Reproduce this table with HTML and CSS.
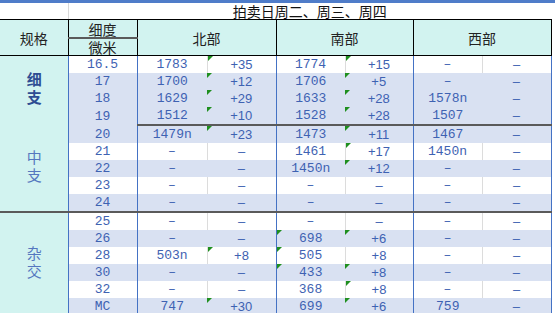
FILE: index.html
```html
<!DOCTYPE html>
<html lang="zh">
<head>
<meta charset="utf-8">
<title>拍卖日</title>
<link rel="stylesheet" href="styles.css">
</head>
<body>
<div class="sheet">
  <div class="topbar"></div>
  <table class="grid">
    <colgroup>
      <col class="c-lab"><col class="c-fine"><col class="c-nv"><col class="c-nd"><col class="c-sv"><col class="c-sd"><col class="c-wv"><col class="c-wd">
    </colgroup>
    <tr class="title">
      <td class="blank"></td>
      <td class="title-cell" colspan="7">拍卖日周二、周三、周四</td>
    </tr>
    <tr class="head1">
      <th class="h-lab" rowspan="2">规格</th>
      <th class="h-fine1">细度</th>
      <th class="h-reg" colspan="2" rowspan="2">北部</th>
      <th class="h-reg" colspan="2" rowspan="2">南部</th>
      <th class="h-reg" colspan="2" rowspan="2">西部</th>
    </tr>
    <tr class="head2">
      <th class="h-fine2">微米</th>
    </tr>

    <tr class="w">
      <td class="lab bold" rowspan="4"><span class="vt">细支</span></td>
      <td class="fine">16.5</td>
      <td class="v">1783</td><td class="d tri">+35</td>
      <td class="v">1774</td><td class="d tri">+15</td>
      <td class="v">–</td><td class="d">–</td>
    </tr>
    <tr class="s">
      <td class="fine">17</td>
      <td class="v">1700</td><td class="d tri">+12</td>
      <td class="v">1706</td><td class="d tri">+5</td>
      <td class="v">–</td><td class="d">–</td>
    </tr>
    <tr class="s">
      <td class="fine">18</td>
      <td class="v">1629</td><td class="d tri">+29</td>
      <td class="v">1633</td><td class="d tri">+28</td>
      <td class="v">1578n</td><td class="d">–</td>
    </tr>
    <tr class="s sep-mid">
      <td class="fine">19</td>
      <td class="v">1512</td><td class="d tri">+10</td>
      <td class="v">1528</td><td class="d tri">+28</td>
      <td class="v">1507</td><td class="d">–</td>
    </tr>
    <tr class="s">
      <td class="lab thick" rowspan="5"><span class="vt">中支</span></td>
      <td class="fine">20</td>
      <td class="v">1479n</td><td class="d tri">+23</td>
      <td class="v">1473</td><td class="d tri">+11</td>
      <td class="v">1467</td><td class="d">–</td>
    </tr>
    <tr class="w">
      <td class="fine">21</td>
      <td class="v">–</td><td class="d">–</td>
      <td class="v">1461</td><td class="d tri">+17</td>
      <td class="v">1450n</td><td class="d">–</td>
    </tr>
    <tr class="s">
      <td class="fine">22</td>
      <td class="v">–</td><td class="d">–</td>
      <td class="v">1450n</td><td class="d tri">+12</td>
      <td class="v">–</td><td class="d">–</td>
    </tr>
    <tr class="w">
      <td class="fine">23</td>
      <td class="v">–</td><td class="d">–</td>
      <td class="v">–</td><td class="d">–</td>
      <td class="v">–</td><td class="d">–</td>
    </tr>
    <tr class="s sep-full">
      <td class="fine">24</td>
      <td class="v">–</td><td class="d">–</td>
      <td class="v">–</td><td class="d">–</td>
      <td class="v">–</td><td class="d">–</td>
    </tr>
    <tr class="w">
      <td class="lab" rowspan="6"><span class="vt">杂交</span></td>
      <td class="fine">25</td>
      <td class="v">–</td><td class="d">–</td>
      <td class="v">–</td><td class="d">–</td>
      <td class="v">–</td><td class="d">–</td>
    </tr>
    <tr class="s">
      <td class="fine">26</td>
      <td class="v">–</td><td class="d">–</td>
      <td class="v tri">698</td><td class="d tri">+6</td>
      <td class="v">–</td><td class="d">–</td>
    </tr>
    <tr class="w">
      <td class="fine">28</td>
      <td class="v">503n</td><td class="d tri">+8</td>
      <td class="v tri">505</td><td class="d">+8</td>
      <td class="v">–</td><td class="d">–</td>
    </tr>
    <tr class="s">
      <td class="fine">30</td>
      <td class="v">–</td><td class="d">–</td>
      <td class="v tri">433</td><td class="d tri">+8</td>
      <td class="v">–</td><td class="d">–</td>
    </tr>
    <tr class="w">
      <td class="fine">32</td>
      <td class="v">–</td><td class="d">–</td>
      <td class="v">368</td><td class="d tri">+8</td>
      <td class="v">–</td><td class="d">–</td>
    </tr>
    <tr class="s">
      <td class="fine">MC</td>
      <td class="v">747</td><td class="d tri">+30</td>
      <td class="v">699</td><td class="d tri">+6</td>
      <td class="v">759</td><td class="d">–</td>
    </tr>
  </table>
</div>
</body>
</html>
```
FILE: styles.css
```css
html, body {
  margin: 0;
  padding: 0;
  background: #ffffff;
}
body {
  width: 555px;
  height: 313px;
  overflow: hidden;
  font-family: "Noto Sans CJK SC", "Noto Sans", sans-serif;
}
.sheet {
  width: 555px;
}
.topbar {
  height: 3px;
  background: #4f7cc9;
}
.grid {
  border-collapse: collapse;
  table-layout: fixed;
  width: 551px;
}
.c-lab { width: 68px; }
.c-fine { width: 69px; }
.c-nv { width: 70px; }
.c-nd { width: 69px; }
.c-sv { width: 69px; }
.c-sd { width: 68px; }
.c-wv { width: 69px; }
.c-wd { width: 69px; }

.grid td, .grid th {
  padding: 0;
  font-weight: normal;
  text-align: center;
  white-space: nowrap;
  overflow: visible;
}

/* title row */
.title td {
  height: 16px;
  border-bottom: 1px solid #000;
}
.title .blank {
  border-right: 1px solid #d9d9d9;
}
.title-cell {
  font-size: 14px;
  line-height: 16px;
  color: #111;
}

/* header rows */
.head1 th, .head2 th {
  background: #d2f3f0;
  color: #222;
  font-size: 14px;
  border-top: 1px solid #000;
  border-bottom: 1px solid #000;
  border-right: 1px solid #000;
}
.head1 th {
  height: 17px;
}
.head2 th {
  height: 16px;
}
.h-lab, .h-reg {
  padding-top: 4px;
  line-height: 16px;
}
.h-fine1 {
  line-height: 16px;
  vertical-align: bottom;
}
.head1 .h-fine1 {
  border-bottom: 2px solid #5a5a5a;
}
.head2 .h-fine2 {
  border-top: 2px solid #5a5a5a;
  line-height: 16px;
}

/* data rows */
.grid tr.w td { background: #ffffff; }
.grid tr.s td { background: #d9e1f2; }
.grid tr td.lab {
  background: #d2f3f0;
  color: #5577bf;
  font-size: 15px;
  border-right: 1px solid #4472c4;
}
.grid tr td.lab.bold {
  color: #2e4d93;
  font-weight: bold;
}
.vt {
  display: inline-block;
  writing-mode: vertical-rl;
  letter-spacing: 3px;
  line-height: 18px;
  padding-top: 3px;
}
.grid td.fine, .grid td.v, .grid td.d {
  height: 17px;
  color: #3e62b2;
  font-size: 13px;
  line-height: 17px;
}
.grid td.fine, .grid td.v {
  font-family: "Liberation Mono", "DejaVu Sans Mono", monospace;
}
.grid td.d {
  font-family: "Liberation Sans", Arial, sans-serif;
}
.grid td.fine {
  border-right: 1px solid #4472c4;
}
.grid tr.w td.v {
  border-right: 1px solid #dcdcdc;
}
.grid td.d {
  border-right: 1px solid #4472c4;
}
.grid tr.sep-mid td.v,
.grid tr.sep-mid td.d {
  border-bottom: 2px solid #5a5a5a;
}
.grid tr.sep-full td,
.grid td.lab.thick {
  border-bottom: 2px solid #5a5a5a;
}

/* error-indicator triangles */
.grid td.tri {
  position: relative;
}
.grid td.tri::before {
  content: "";
  position: absolute;
  left: 0;
  top: 0;
  border-top: 5px solid #1f8f1f;
  border-right: 5px solid transparent;
}
```
